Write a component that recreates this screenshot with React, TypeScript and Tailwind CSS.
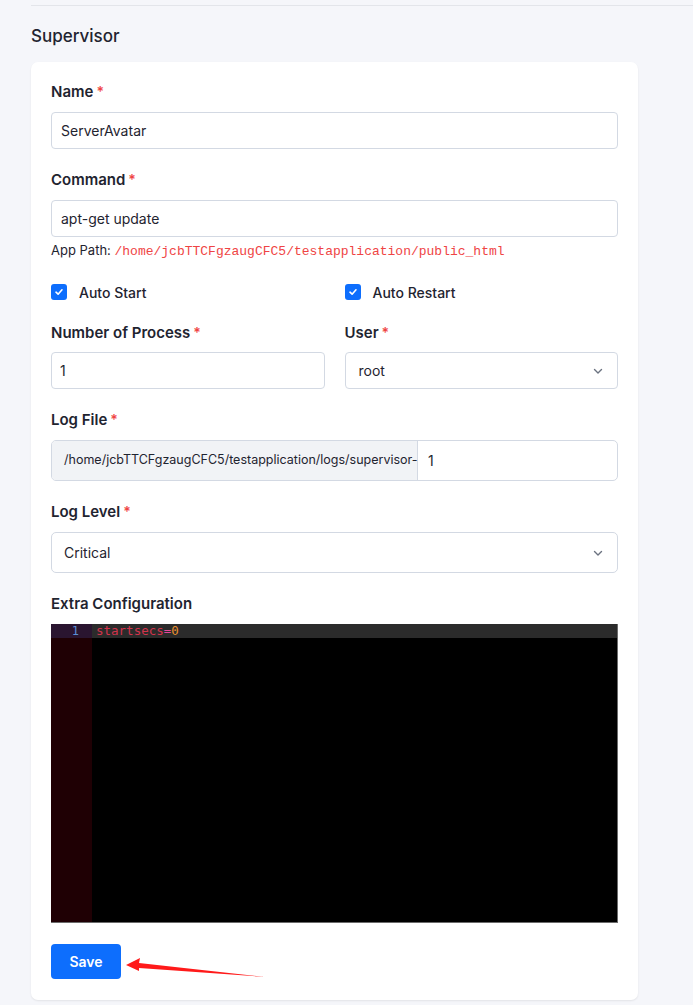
import React from "react";

const Req = () => <span className="text-[#ef4444] ml-[3px] text-[14px] align-top">*</span>;

const Label = ({ children, req = true }: { children: React.ReactNode; req?: boolean }) => (
  <div className="text-[15px] font-semibold text-[#1f2430] leading-[20px] h-[20px]">
    {children}
    {req && <Req />}
  </div>
);

const Check = ({ label }: { label: string }) => (
  <div className="flex items-center gap-[12px] h-[20px]">
    <div className="w-[16px] h-[16px] rounded-[3px] bg-[#0d6efd] flex items-center justify-center">
      <svg width="10" height="10" viewBox="0 0 10 10" fill="none">
        <path d="M2 5.2 L4.1 7.2 L8 2.8" stroke="white" strokeWidth="1.6" strokeLinecap="round" strokeLinejoin="round" />
      </svg>
    </div>
    <span className="text-[14px] font-medium text-[#1f2430]">{label}</span>
  </div>
);

const Chevron = () => (
  <svg width="12" height="12" viewBox="0 0 12 12" fill="none">
    <path d="M2.5 4.5 L6 8 L9.5 4.5" stroke="#6b7280" strokeWidth="1.4" strokeLinecap="round" strokeLinejoin="round" />
  </svg>
);

export default function App() {
  return (
    <div className="min-h-[1005px] bg-[#f5f6fa] pt-[5px]" style={{ fontFamily: "Inter, 'Noto Sans', sans-serif" }}>
      <div className="ml-[31px] h-[1px] bg-[#e3e5ea]" />
      <div className="pl-[31px] pt-[19px]">
        <h2 className="text-[17px] font-medium text-[#1f2430] leading-[22px]">Supervisor</h2>
        <div className="mt-[15px] w-[607px] bg-white rounded-[7px] shadow-[0_1px_2px_rgba(0,0,0,0.08)] px-[20px] pt-[20px] pb-[21px]">
          <Label>Name</Label>
          <div className="mt-[10px] h-[37px] border border-[#d3d9e3] rounded-[4px] flex items-center px-[9px] text-[14px] text-[#1f2430]">
            ServerAvatar
          </div>

          <div className="mt-[21px]">
            <Label>Command</Label>
          </div>
          <div className="mt-[10px] h-[37px] border border-[#d3d9e3] rounded-[4px] flex items-center px-[9px] text-[14px] text-[#1f2430]">
            apt-get update
          </div>
          <div className="mt-[4px] text-[13px] text-[#1f2430] leading-[18px]">
            App Path:{" "}
            <span className="text-[#ef4444] text-[13px]" style={{ fontFamily: "'Liberation Mono', 'DejaVu Sans Mono', monospace" }}>
              /home/jcbTTCFgzaugCFC5/testapplication/public_html
            </span>
          </div>

          <div className="mt-[21px] grid grid-cols-2 gap-[20px]">
            <Check label="Auto Start" />
            <Check label="Auto Restart" />
          </div>

          <div className="mt-[21px] grid grid-cols-2 gap-[20px]">
            <div>
              <Label>Number of Process</Label>
              <div className="mt-[9px] h-[37px] border border-[#d3d9e3] rounded-[4px] flex items-center px-[8px] text-[14px] text-[#1f2430]">
                1
              </div>
            </div>
            <div>
              <Label>User</Label>
              <div className="mt-[9px] h-[37px] border border-[#d3d9e3] rounded-[4px] flex items-center justify-between pl-[13px] pr-[13px] text-[14px] text-[#1f2430]">
                <span>root</span>
                <Chevron />
              </div>
            </div>
          </div>

          <div className="mt-[21px]">
            <Label>Log File</Label>
          </div>
          <div className="mt-[10px] h-[41px] border border-[#d3d9e3] rounded-[5px] flex overflow-hidden">
            <div className="w-[366px] bg-[#f1f3f6] border-r border-[#d3d9e3] flex items-center pl-[12px] text-[12.5px] text-[#1f2430] whitespace-nowrap">
              /home/jcbTTCFgzaugCFC5/testapplication/logs/supervisor-
            </div>
            <div className="flex-1 flex items-center pl-[10px] text-[14px] text-[#1f2430]">1</div>
          </div>

          <div className="mt-[21px]">
            <Label>Log Level</Label>
          </div>
          <div className="mt-[10px] h-[41px] border border-[#d3d9e3] rounded-[5px] flex items-center justify-between pl-[12px] pr-[13px] text-[14px] text-[#1f2430]">
            <span>Critical</span>
            <Chevron />
          </div>

          <div className="mt-[21px]">
            <Label req={false}>Extra Configuration</Label>
          </div>
          <div
            className="mt-[10px] h-[299px] bg-black flex border-r border-b border-[#6b6b6b] text-[13px]"
            style={{ fontFamily: "'DejaVu Sans Mono', 'Liberation Mono', monospace" }}
          >
            <div className="w-[41px] bg-[#1f0004] flex flex-col">
              <div className="h-[14px] bg-[#2a1530] text-[#5b8fd6] text-[12px] leading-[14px] text-right pr-[13px]">1</div>
            </div>
            <div className="flex-1 flex flex-col">
              <div className="h-[14px] bg-[#2b2b2b] leading-[14px] pl-[4px] text-[12.5px]">
                <span className="text-[#d2334b]">startsecs</span>
                <span className="text-[#e6469a]">=</span>
                <span className="text-[#e8902f]">0</span>
              </div>
            </div>
          </div>

          <div className="mt-[21px] relative h-[35px]">
            <button className="w-[70px] h-[35px] rounded-[4px] bg-[#0d6efd] text-white text-[14px] font-semibold">Save</button>
            <svg className="absolute left-[72px] top-[6px]" width="150" height="30" viewBox="0 0 150 30">
              <path d="M142 27 L16 13 L17 8 L3 15 L16 21 L16 18 Z" fill="#ff1a1a" />
            </svg>
          </div>
        </div>
      </div>
    </div>
  );
}
